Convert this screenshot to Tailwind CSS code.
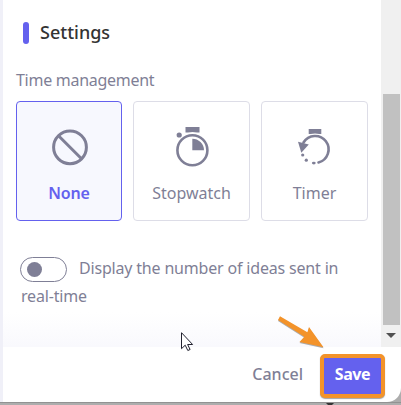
<!DOCTYPE html>
<html lang="en">
  <head>
    <meta charset="UTF-8" />
    <meta name="viewport" content="width=device-width, initial-scale=1" />
    <title>Settings</title>
    <script src="https://cdn.jsdelivr.net/npm/@tailwindcss/browser@4"></script>
  </head>
  <body class="bg-white font-['Noto_Sans',sans-serif] text-[16px] text-[#7f7f96]">
    <div class="relative flex h-[405px] w-[401px] flex-col overflow-hidden bg-[#adadad]">
      <div class="flex h-[402px] rounded-br-[14px] bg-white">
        <div class="w-[3px] shrink-0 bg-[#f0f0f8]"></div>
        <div class="flex min-w-0 flex-1 flex-col">
          <!-- Scrollable content -->
          <div class="flex h-[347px]">
            <main class="flex w-[378px] flex-col bg-linear-to-b from-white from-90% to-[#f9f9fd] pl-[13px]">
              <h2 class="mt-[20px] flex h-[24px] items-center gap-[11px] pl-[7px] text-[18px] font-medium text-[#333]">
                <span class="mt-[2px] h-[22px] w-[6px] rounded-full bg-[#6461ee]"></span>
                <span class="w-[70px] whitespace-nowrap">Settings</span>
              </h2>
              <p class="mt-[24px] h-[24px] leading-[24px] tracking-[-0.28px]">Time management</p>

              <!-- Time management options -->
              <div class="mt-[9px] flex h-[120px] gap-[11px]">
                <div class="flex w-[106px] flex-col items-center rounded-[4px] border border-[#6461ee] bg-[#f7f8fe] pt-[24px]">
                  <svg class="h-[44px] w-[44px]" viewBox="0 0 44 44" fill="none" stroke="#7f7f96" stroke-width="3">
                    <circle cx="23" cy="21.3" r="16.4" />
                    <path d="M11.500 9.800 34.500 32.800" />
                  </svg>
                  <span class="mt-[11px] leading-[24px] font-semibold tracking-[-0.2px] text-[#6461ee]">None</span>
                </div>
                <div class="flex w-[117px] flex-col items-center rounded-[4px] border border-[#dddde7] pt-[24px]">
                  <svg class="h-[44px] w-[44px]" viewBox="0 0 44 44" fill="#7f7f96">
                    <path d="M15.500 1h14v5.600h-2.500q-4.500-1.200-9 0h-2.500z" />
                    <circle cx="9.200" cy="9" r="2.600" />
                    <circle cx="22.400" cy="24.300" r="15" fill="none" stroke="#7f7f96" stroke-width="2.600" />
                    <path d="M22.300 24.300v-11.600a11.700 11.700 0 0 1 11.700 11.600z" />
                  </svg>
                  <span class="mt-[11px] leading-[24px]">Stopwatch</span>
                </div>
                <div class="flex w-[107px] flex-col items-center rounded-[4px] border border-[#dddde7] pt-[24px]">
                  <svg class="h-[44px] w-[44px]" viewBox="0 0 44 44" fill="#7f7f96">
                    <path d="M15.700 3h12.600v5h-2q-4.300-1.200-8.600 0h-2z" />
                    <path d="M10.500 16.500a13.500 13.500 0 1 1 15 20" fill="none" stroke="#7f7f96" stroke-width="2.600" stroke-linecap="round" />
                    <path d="M5 15.800 15.800 18.600 8.300 26.800z" />
                    <circle cx="9.700" cy="29" r="1.600" />
                    <circle cx="13.300" cy="34.200" r="1.600" />
                    <ellipse cx="20.800" cy="37.100" rx="1.900" ry="1.400" />
                  </svg>
                  <span class="mt-[11px] leading-[24px]">Timer</span>
                </div>
              </div>

              <!-- Idea counter toggle -->
              <div class="mt-[33px] w-[340px] pl-[4px] leading-[28px] tracking-[-0.18px]">
                <span class="mr-[8px] inline-flex h-[25px] w-[47px] items-center rounded-full border border-[#7f7f96] pl-[6px] align-[-3px]">
                  <span class="h-[15px] w-[15px] rounded-full bg-[#7f7f96]"></span>
                </span>
                Display the number of ideas sent in<br /><span class="ml-[1px]">real-time</span>
              </div>
            </main>

            <!-- Scrollbar -->
            <div class="flex flex-1 flex-col bg-[#f0f0f0] pt-[94px] pr-[1px] pl-[2px]">
              <div class="h-[231px] bg-[#c1c1c1]"></div>
              <svg class="mt-[8px] ml-[3px] h-[5px] w-[10px]" viewBox="0 0 10 5" fill="#505050"><path d="M0 0h10L5 5z" /></svg>
            </div>
          </div>

          <!-- Actions -->
          <footer class="flex h-[55px] items-center justify-end pr-[16px]">
            <button class="mr-[17px] mb-[2px] font-medium">Cancel</button>
            <button class="mt-[3px] h-[44px] w-[65px] rounded-[5px] border-4 border-[#f3932a] bg-[#6461ee] pb-[4px] font-bold tracking-[-0.4px] text-white shadow-[0_1px_1px_#66666699]">Save</button>
          </footer>
        </div>
      </div>
      <div class="h-[3px] border-t border-[#929292]">
        <svg class="ml-[326px] block h-[2px] w-[8px]" viewBox="0 0 8 2" fill="#333"><path d="M0 0h8L6 2H2z" /></svg>
      </div>

      <!-- Pointer and callout arrow -->
      <svg class="absolute top-[332px] left-[181px] h-[20px] w-[13px]" viewBox="0 0 13 20" fill="#fff" stroke="#222230">
        <path d="M.5.7v16l3.700-3.500 2.600 5.300 2.300-1-2.500-5h5z" />
      </svg>
      <svg class="absolute top-[314px] left-[275px] h-[36px] w-[52px] drop-shadow-[0_1px_0_#77777799]" viewBox="0 0 52 36" fill="#f3932a">
        <path d="M5 2.200 32.400 18.300 34 13 48.500 33.300 24.500 28 29.300 22.700 3 6z" />
      </svg>
    </div>
  </body>
</html>
